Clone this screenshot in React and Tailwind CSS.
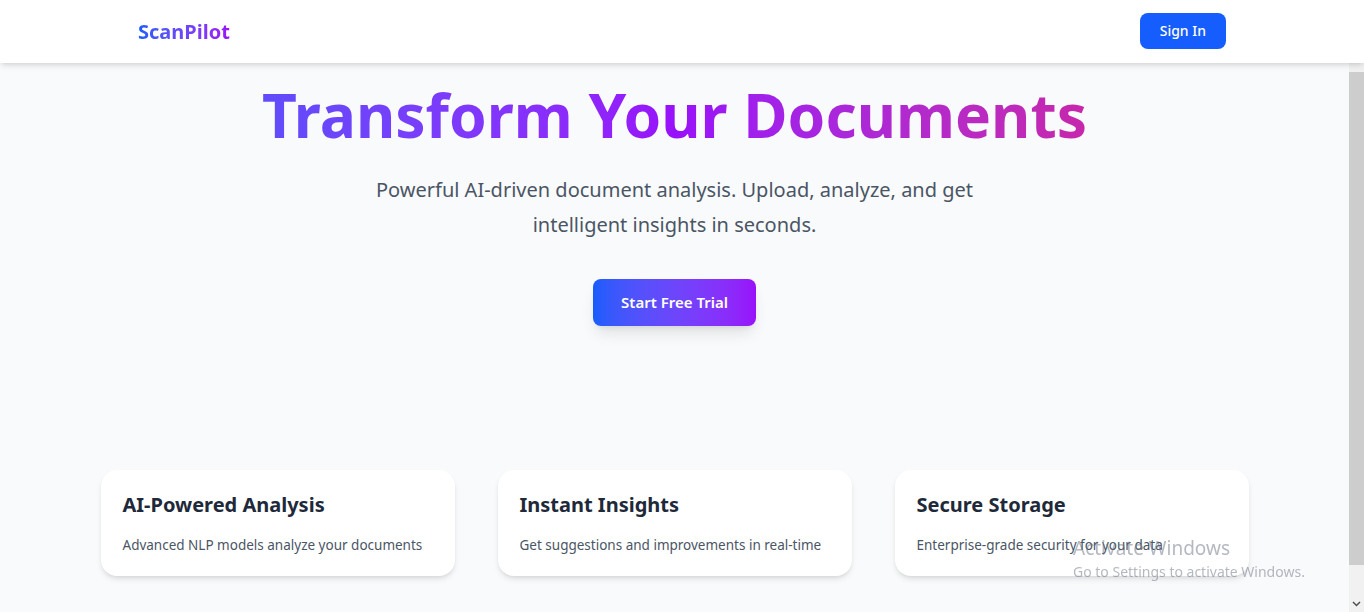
const features = [
  { title: 'AI-Powered Analysis', desc: 'Advanced NLP models analyze your documents' },
  { title: 'Instant Insights', desc: 'Get suggestions and improvements in real-time' },
  { title: 'Secure Storage', desc: 'Enterprise-grade security for your data' },
];

function Header() {
  return (
    <header className="relative z-10 h-[63px] shrink-0 bg-white shadow-md">
      <div className="max-w-6xl mx-auto px-8 h-full flex items-center justify-between">
        <span className="text-xl font-bold bg-linear-to-r from-blue-600 to-purple-600 bg-clip-text text-transparent">
          ScanPilot
        </span>
        <button className="bg-blue-600 text-white text-sm font-medium h-9 px-5 rounded-lg -mt-px">
          Sign In
        </button>
      </div>
    </header>
  );
}

// page scrollbar as seen in the screenshot
function ScrollTrack() {
  return (
    <div className="w-[15px] shrink-0 bg-[#f1f1f1] flex flex-col">
      <div className="mt-[9px] h-[493px] bg-[#cdcdcd]" />
      <div className="mt-auto h-[17px] flex items-center justify-center text-[#505050]">
        <svg width="9" height="6" viewBox="0 0 9 6" fill="none">
          <path d="M1 1l3.5 3.5L8 1" stroke="currentColor" strokeWidth="1.5" />
        </svg>
      </div>
    </div>
  );
}

export default function App() {
  return (
    <div className="h-screen flex flex-col bg-gray-50 font-['Segoe_UI','Noto_Sans',sans-serif] overflow-hidden">
      <Header />
      <div className="flex-1 flex min-h-0">
        <main className="flex-1 overflow-hidden">
          <section className="pt-[14px] text-center">
            <h1 className="text-[60.5px] leading-tight font-bold bg-linear-to-r from-blue-600 via-purple-600 to-pink-600 bg-clip-text text-transparent">
              Transform Your Documents
            </h1>
            <p className="mt-[19px] max-w-[640px] mx-auto text-xl leading-[35px] text-gray-600">
              Powerful AI-driven document analysis. Upload, analyze, and get intelligent insights in seconds.
            </p>
            <button className="mt-[37px] h-[47px] px-7 rounded-lg bg-linear-to-r from-blue-600 to-purple-600 text-white text-[15px] font-semibold shadow-lg">
              Start Free Trial
            </button>
          </section>

          <section className="mt-[144px] pb-[96px] px-4">
            <div className="max-w-[1148px] mx-auto grid grid-cols-3 gap-[43px]">
              {features.map((f) => (
                <div key={f.title} className="bg-white rounded-2xl shadow-md px-[22px] pt-[21px] pb-[21px]">
                  <h3 className="text-xl leading-7 font-bold text-gray-800">{f.title}</h3>
                  <p className="mt-4 text-[13.5px] leading-5 whitespace-nowrap text-gray-600">{f.desc}</p>
                </div>
              ))}
            </div>
          </section>
        </main>
        <ScrollTrack />
      </div>

      <div className="pointer-events-none fixed left-[1073px] top-[536px] text-gray-500/50 font-['Noto_Sans',sans-serif]">
        <div className="text-[19px] leading-6">Activate Windows</div>
        <div className="text-sm leading-5 mt-0.5">Go to Settings to activate Windows.</div>
      </div>
    </div>
  );
}
